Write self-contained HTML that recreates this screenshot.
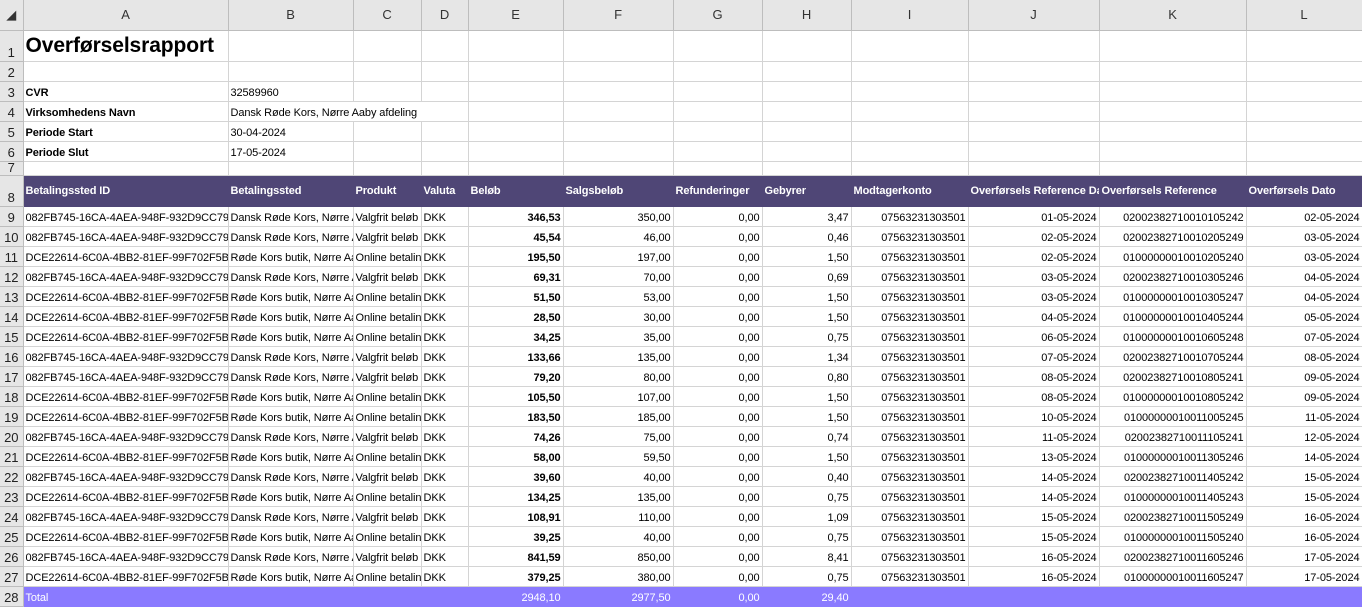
<!DOCTYPE html>
<html><head><meta charset="utf-8"><style>
*{margin:0;padding:0;box-sizing:border-box}
body{width:1362px;height:606px;overflow:hidden;background:#fff;font-family:"Liberation Sans",Arial,sans-serif;font-size:11px;color:#000}
table{border-collapse:collapse;table-layout:fixed;width:1362px}
td{border-right:1px solid #d4d4d4;border-bottom:1px solid #d4d4d4;white-space:nowrap;overflow:hidden;padding:0 2px;vertical-align:bottom;padding-bottom:2px;letter-spacing:-0.1px}
tr.h td{background:#e6e6e6;border-color:#bdbdbd;text-align:center;vertical-align:middle;font-size:13px;color:#333;padding:0}
td.n{background:#e6e6e6;border-color:#bdbdbd;text-align:center;font-size:13px;color:#222;padding:0 0 1px}
td.r{text-align:right}
td.b{font-weight:bold}
tr.hd td:not(.n){background:#4f4676;color:#fff;font-weight:bold;border-color:#4f4676;vertical-align:middle;padding-bottom:0}
tr.t td:not(.n){background:#8a7aff;color:#fff;border-color:#8a7aff}
tr.t td.r{font-weight:normal}
.ov{overflow:visible}
</style></head><body>
<table>
<colgroup><col style="width:23px"><col style="width:205px"><col style="width:125px"><col style="width:68px"><col style="width:47px"><col style="width:95px"><col style="width:110px"><col style="width:89px"><col style="width:89px"><col style="width:117px"><col style="width:131px"><col style="width:147px"><col style="width:116px"></colgroup>
<tr class="h" style="height:30px"><td>◢</td><td>A</td><td>B</td><td>C</td><td>D</td><td>E</td><td>F</td><td>G</td><td>H</td><td>I</td><td>J</td><td>K</td><td>L</td></tr>
<tr style="height:31px"><td class="n">1</td><td style="font-size:21px;font-weight:bold;padding-bottom:3px">Overførselsrapport</td><td></td><td></td><td></td><td></td><td></td><td></td><td></td><td></td><td></td><td></td><td></td></tr>
<tr style="height:20px"><td class="n">2</td><td></td><td></td><td></td><td></td><td></td><td></td><td></td><td></td><td></td><td></td><td></td><td></td></tr>
<tr style="height:20px"><td class="n">3</td><td class="b">CVR</td><td>32589960</td><td></td><td></td><td></td><td></td><td></td><td></td><td></td><td></td><td></td><td></td></tr>
<tr style="height:20px"><td class="n">4</td><td class="b">Virksomhedens Navn</td><td class="ov" style="border-right:none">Dansk Røde Kors, Nørre Aaby afdeling</td><td style="border-right:none"></td><td></td><td></td><td></td><td></td><td></td><td></td><td></td><td></td><td></td></tr>
<tr style="height:20px"><td class="n">5</td><td class="b">Periode Start</td><td>30-04-2024</td><td></td><td></td><td></td><td></td><td></td><td></td><td></td><td></td><td></td><td></td></tr>
<tr style="height:20px"><td class="n">6</td><td class="b">Periode Slut</td><td>17-05-2024</td><td></td><td></td><td></td><td></td><td></td><td></td><td></td><td></td><td></td><td></td></tr>
<tr style="height:14px"><td class="n" style="line-height:12px">7</td><td></td><td></td><td></td><td></td><td></td><td></td><td></td><td></td><td></td><td></td><td></td><td></td></tr>
<tr class="hd" style="height:31px"><td class="n">8</td><td>Betalingssted ID</td><td>Betalingssted</td><td>Produkt</td><td>Valuta</td><td>Beløb</td><td>Salgsbeløb</td><td>Refunderinger</td><td>Gebyrer</td><td>Modtagerkonto</td><td>Overførsels Reference Dato</td><td>Overførsels Reference</td><td>Overførsels Dato</td></tr>
<tr style="height:20px"><td class="n">9</td><td>082FB745-16CA-4AEA-948F-932D9CC793DE</td><td>Dansk Røde Kors, Nørre Aaby</td><td>Valgfrit beløb</td><td>DKK</td><td class="r b">346,53</td><td class="r">350,00</td><td class="r">0,00</td><td class="r">3,47</td><td class="r">07563231303501</td><td class="r">01-05-2024</td><td class="r">02002382710010105242</td><td class="r">02-05-2024</td></tr>
<tr style="height:20px"><td class="n">10</td><td>082FB745-16CA-4AEA-948F-932D9CC793DE</td><td>Dansk Røde Kors, Nørre Aaby</td><td>Valgfrit beløb</td><td>DKK</td><td class="r b">45,54</td><td class="r">46,00</td><td class="r">0,00</td><td class="r">0,46</td><td class="r">07563231303501</td><td class="r">02-05-2024</td><td class="r">02002382710010205249</td><td class="r">03-05-2024</td></tr>
<tr style="height:20px"><td class="n">11</td><td>DCE22614-6C0A-4BB2-81EF-99F702F5BA12</td><td>Røde Kors butik, Nørre Aaby</td><td>Online betaling</td><td>DKK</td><td class="r b">195,50</td><td class="r">197,00</td><td class="r">0,00</td><td class="r">1,50</td><td class="r">07563231303501</td><td class="r">02-05-2024</td><td class="r">01000000010010205240</td><td class="r">03-05-2024</td></tr>
<tr style="height:20px"><td class="n">12</td><td>082FB745-16CA-4AEA-948F-932D9CC793DE</td><td>Dansk Røde Kors, Nørre Aaby</td><td>Valgfrit beløb</td><td>DKK</td><td class="r b">69,31</td><td class="r">70,00</td><td class="r">0,00</td><td class="r">0,69</td><td class="r">07563231303501</td><td class="r">03-05-2024</td><td class="r">02002382710010305246</td><td class="r">04-05-2024</td></tr>
<tr style="height:20px"><td class="n">13</td><td>DCE22614-6C0A-4BB2-81EF-99F702F5BA12</td><td>Røde Kors butik, Nørre Aaby</td><td>Online betaling</td><td>DKK</td><td class="r b">51,50</td><td class="r">53,00</td><td class="r">0,00</td><td class="r">1,50</td><td class="r">07563231303501</td><td class="r">03-05-2024</td><td class="r">01000000010010305247</td><td class="r">04-05-2024</td></tr>
<tr style="height:20px"><td class="n">14</td><td>DCE22614-6C0A-4BB2-81EF-99F702F5BA12</td><td>Røde Kors butik, Nørre Aaby</td><td>Online betaling</td><td>DKK</td><td class="r b">28,50</td><td class="r">30,00</td><td class="r">0,00</td><td class="r">1,50</td><td class="r">07563231303501</td><td class="r">04-05-2024</td><td class="r">01000000010010405244</td><td class="r">05-05-2024</td></tr>
<tr style="height:20px"><td class="n">15</td><td>DCE22614-6C0A-4BB2-81EF-99F702F5BA12</td><td>Røde Kors butik, Nørre Aaby</td><td>Online betaling</td><td>DKK</td><td class="r b">34,25</td><td class="r">35,00</td><td class="r">0,00</td><td class="r">0,75</td><td class="r">07563231303501</td><td class="r">06-05-2024</td><td class="r">01000000010010605248</td><td class="r">07-05-2024</td></tr>
<tr style="height:20px"><td class="n">16</td><td>082FB745-16CA-4AEA-948F-932D9CC793DE</td><td>Dansk Røde Kors, Nørre Aaby</td><td>Valgfrit beløb</td><td>DKK</td><td class="r b">133,66</td><td class="r">135,00</td><td class="r">0,00</td><td class="r">1,34</td><td class="r">07563231303501</td><td class="r">07-05-2024</td><td class="r">02002382710010705244</td><td class="r">08-05-2024</td></tr>
<tr style="height:20px"><td class="n">17</td><td>082FB745-16CA-4AEA-948F-932D9CC793DE</td><td>Dansk Røde Kors, Nørre Aaby</td><td>Valgfrit beløb</td><td>DKK</td><td class="r b">79,20</td><td class="r">80,00</td><td class="r">0,00</td><td class="r">0,80</td><td class="r">07563231303501</td><td class="r">08-05-2024</td><td class="r">02002382710010805241</td><td class="r">09-05-2024</td></tr>
<tr style="height:20px"><td class="n">18</td><td>DCE22614-6C0A-4BB2-81EF-99F702F5BA12</td><td>Røde Kors butik, Nørre Aaby</td><td>Online betaling</td><td>DKK</td><td class="r b">105,50</td><td class="r">107,00</td><td class="r">0,00</td><td class="r">1,50</td><td class="r">07563231303501</td><td class="r">08-05-2024</td><td class="r">01000000010010805242</td><td class="r">09-05-2024</td></tr>
<tr style="height:20px"><td class="n">19</td><td>DCE22614-6C0A-4BB2-81EF-99F702F5BA12</td><td>Røde Kors butik, Nørre Aaby</td><td>Online betaling</td><td>DKK</td><td class="r b">183,50</td><td class="r">185,00</td><td class="r">0,00</td><td class="r">1,50</td><td class="r">07563231303501</td><td class="r">10-05-2024</td><td class="r">01000000010011005245</td><td class="r">11-05-2024</td></tr>
<tr style="height:20px"><td class="n">20</td><td>082FB745-16CA-4AEA-948F-932D9CC793DE</td><td>Dansk Røde Kors, Nørre Aaby</td><td>Valgfrit beløb</td><td>DKK</td><td class="r b">74,26</td><td class="r">75,00</td><td class="r">0,00</td><td class="r">0,74</td><td class="r">07563231303501</td><td class="r">11-05-2024</td><td class="r">02002382710011105241</td><td class="r">12-05-2024</td></tr>
<tr style="height:20px"><td class="n">21</td><td>DCE22614-6C0A-4BB2-81EF-99F702F5BA12</td><td>Røde Kors butik, Nørre Aaby</td><td>Online betaling</td><td>DKK</td><td class="r b">58,00</td><td class="r">59,50</td><td class="r">0,00</td><td class="r">1,50</td><td class="r">07563231303501</td><td class="r">13-05-2024</td><td class="r">01000000010011305246</td><td class="r">14-05-2024</td></tr>
<tr style="height:20px"><td class="n">22</td><td>082FB745-16CA-4AEA-948F-932D9CC793DE</td><td>Dansk Røde Kors, Nørre Aaby</td><td>Valgfrit beløb</td><td>DKK</td><td class="r b">39,60</td><td class="r">40,00</td><td class="r">0,00</td><td class="r">0,40</td><td class="r">07563231303501</td><td class="r">14-05-2024</td><td class="r">02002382710011405242</td><td class="r">15-05-2024</td></tr>
<tr style="height:20px"><td class="n">23</td><td>DCE22614-6C0A-4BB2-81EF-99F702F5BA12</td><td>Røde Kors butik, Nørre Aaby</td><td>Online betaling</td><td>DKK</td><td class="r b">134,25</td><td class="r">135,00</td><td class="r">0,00</td><td class="r">0,75</td><td class="r">07563231303501</td><td class="r">14-05-2024</td><td class="r">01000000010011405243</td><td class="r">15-05-2024</td></tr>
<tr style="height:20px"><td class="n">24</td><td>082FB745-16CA-4AEA-948F-932D9CC793DE</td><td>Dansk Røde Kors, Nørre Aaby</td><td>Valgfrit beløb</td><td>DKK</td><td class="r b">108,91</td><td class="r">110,00</td><td class="r">0,00</td><td class="r">1,09</td><td class="r">07563231303501</td><td class="r">15-05-2024</td><td class="r">02002382710011505249</td><td class="r">16-05-2024</td></tr>
<tr style="height:20px"><td class="n">25</td><td>DCE22614-6C0A-4BB2-81EF-99F702F5BA12</td><td>Røde Kors butik, Nørre Aaby</td><td>Online betaling</td><td>DKK</td><td class="r b">39,25</td><td class="r">40,00</td><td class="r">0,00</td><td class="r">0,75</td><td class="r">07563231303501</td><td class="r">15-05-2024</td><td class="r">01000000010011505240</td><td class="r">16-05-2024</td></tr>
<tr style="height:20px"><td class="n">26</td><td>082FB745-16CA-4AEA-948F-932D9CC793DE</td><td>Dansk Røde Kors, Nørre Aaby</td><td>Valgfrit beløb</td><td>DKK</td><td class="r b">841,59</td><td class="r">850,00</td><td class="r">0,00</td><td class="r">8,41</td><td class="r">07563231303501</td><td class="r">16-05-2024</td><td class="r">02002382710011605246</td><td class="r">17-05-2024</td></tr>
<tr style="height:20px"><td class="n">27</td><td>DCE22614-6C0A-4BB2-81EF-99F702F5BA12</td><td>Røde Kors butik, Nørre Aaby</td><td>Online betaling</td><td>DKK</td><td class="r b">379,25</td><td class="r">380,00</td><td class="r">0,00</td><td class="r">0,75</td><td class="r">07563231303501</td><td class="r">16-05-2024</td><td class="r">01000000010011605247</td><td class="r">17-05-2024</td></tr>
<tr class="t" style="height:20px"><td class="n">28</td><td>Total</td><td></td><td></td><td></td><td class="r">2948,10</td><td class="r">2977,50</td><td class="r">0,00</td><td class="r">29,40</td><td></td><td></td><td></td><td></td></tr>
</table>
</body></html>
